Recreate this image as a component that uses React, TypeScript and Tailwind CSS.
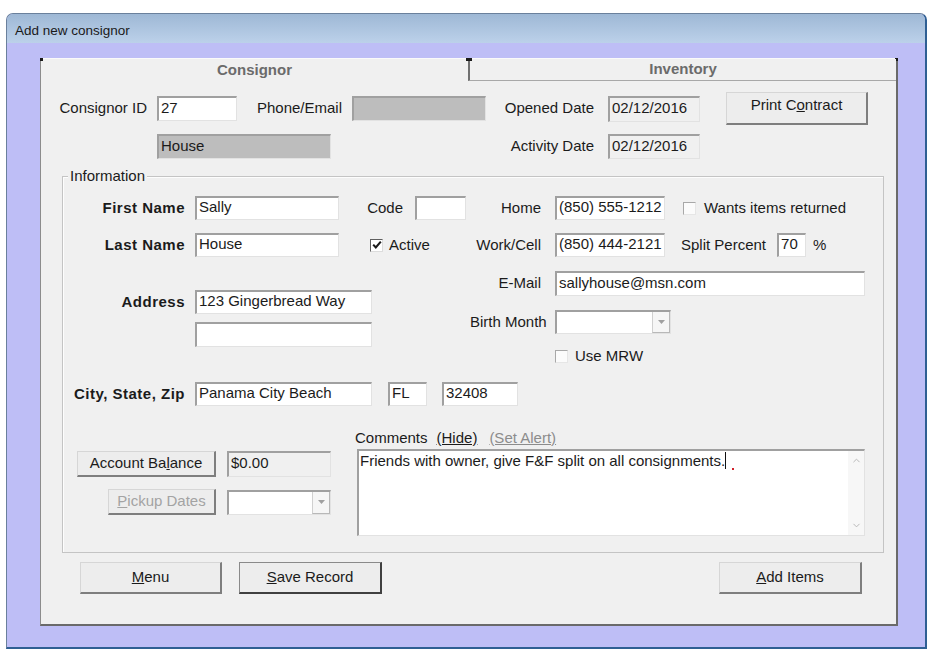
import React from 'react';
import { ChevronUp, ChevronDown } from 'lucide-react';

const sunken =
  'border-t-2 border-l-2 border-r border-b border-t-[#a0a0a0] border-l-[#a0a0a0] border-r-[#e2e2e2] border-b-[#e2e2e2]';

function TextBox({
  className,
  value,
  tone = 'white',
}: {
  className: string;
  value?: string;
  tone?: 'white' | 'gray' | 'disabled';
}) {
  const bg = tone === 'gray' ? 'bg-[#bdbdbd]' : tone === 'disabled' ? 'bg-[#f0f0f0]' : 'bg-white';
  return (
    <div
      className={`${sunken} ${bg} ${className} flex items-center pl-[2px] pb-[2px] text-[15px] text-[#1b1b1b] whitespace-nowrap overflow-hidden shrink-0`}
    >
      {value}
    </div>
  );
}

function Combo({ className }: { className: string }) {
  return (
    <div className={`${sunken} bg-white ${className} flex justify-end shrink-0`}>
      <div className="w-[18px] h-full bg-[#f6f6f6] border-l border-l-[#d0d0d0] border-r border-r-[#b8b8b8] border-b border-b-[#b8b8b8] flex items-center justify-center">
        <svg width="7" height="4" viewBox="0 0 7 4">
          <path d="M0 0h7L3.5 4z" fill="#a0a0a0" />
        </svg>
      </div>
    </div>
  );
}

function Btn({
  className,
  children,
  def = false,
  disabled = false,
}: {
  className: string;
  children: React.ReactNode;
  def?: boolean;
  disabled?: boolean;
}) {
  const border = def
    ? 'border border-t-[#8a8a8a] border-l-[#8a8a8a] border-r-2 border-b-2 border-r-[#404040] border-b-[#404040]'
    : 'border border-t-[#d6d6d6] border-l-[#d6d6d6] border-r-2 border-b-2 border-r-[#7e7e7e] border-b-[#7e7e7e]';
  return (
    <div
      className={`${border} ${className} bg-[#ededed] flex items-center justify-center text-[15px] whitespace-nowrap shrink-0 ${
        disabled ? 'text-[#a3a3a3]' : 'text-[#1b1b1b]'
      }`}
    >
      {children}
    </div>
  );
}

function Check({ checked = false }: { checked?: boolean }) {
  return (
    <div
      className={`w-[13px] h-[13px] shrink-0 flex items-center justify-center border ${
        checked
          ? 'border-t-[#5f5f5f] border-l-[#5f5f5f] border-r-[#dcdcdc] border-b-[#dcdcdc] bg-white'
          : 'border-t-[#a8a8a8] border-l-[#a8a8a8] border-r-[#e6e6e6] border-b-[#e6e6e6] bg-[#fbfbfb]'
      }`}
    >
      {checked && (
        <svg width="10" height="10" viewBox="0 0 10 10">
          <path d="M1.2 4.6 L3.8 7.4 L8.8 1.6" stroke="#1a1a1a" strokeWidth="2.1" fill="none" />
        </svg>
      )}
    </div>
  );
}

const boldLabel = 'font-bold tracking-[0.5px] text-[15px] text-[#1b1b1b]';

export default function App() {
  return (
    <div className="w-[933px] h-[655px] bg-white overflow-hidden pt-[13px] pl-[6px] font-['Liberation_Sans',Arial,sans-serif] text-[15px] text-[#1b1b1b]">
      {/* Window */}
      <div className="w-[921px] h-[636px] rounded-t-[7px] border border-[#6a809c] border-r-2 border-r-[#2f5f93] border-b-2 border-b-[#2f5f93] bg-[#bebef6] flex flex-col overflow-hidden">
        {/* Title bar */}
        <div className="h-[29px] shrink-0 bg-gradient-to-b from-[#9eb8d5] to-[#bcd1ea] flex items-center pl-[8px] pt-[5px] text-[13.5px] text-[#1a1a1a]">
          Add new consignor
        </div>

        {/* Body */}
        <div className="pl-[33px] pt-[15px]">
          {/* Tab panel */}
          <div className="relative w-[858px] h-[568px] bg-[#f0f0f0] border-t border-t-[#fafafa] border-l border-l-[#8c8c8c] border-r-2 border-r-[#6a6a6a] border-b-2 border-b-[#6a6a6a] flex flex-col">
            <span className="absolute -top-[1px] -left-[1px] w-[3px] h-[3px] bg-[#1a1a1a]" />
            <span className="absolute -top-[1px] -right-[2px] w-[3px] h-[3px] bg-[#1a1a1a]" />

            {/* Tabs */}
            <div className="h-[22px] flex shrink-0">
              <div className="w-[427px] flex items-center justify-center font-bold text-[15px] text-[#6b6b6b]">
                Consignor
              </div>
              <div className="relative flex-1 border-l-2 border-l-[#707070] border-b border-b-[#a8a8a8] bg-[#f0f0f0] flex items-center justify-center font-bold text-[15px] text-[#6b6b6b]">
                <span className="absolute -top-[1px] -left-[4px] w-[6px] h-[3px] bg-[#1a1a1a]" />
                Inventory
              </div>
            </div>

            {/* Top section */}
            <div className="pt-[11px]">
              {/* Row A */}
              <div className="flex items-center h-[33px]">
                <div className="w-[106px] text-right shrink-0">Consignor ID</div>
                <TextBox className="ml-[10px] w-[80px] h-[25px]" value="27" />
                <div className="w-[105px] text-right shrink-0">Phone/Email</div>
                <TextBox className="ml-[10px] w-[134px] h-[25px]" tone="gray" />
                <div className="w-[108px] text-right shrink-0">Opened Date</div>
                <TextBox className="ml-[14px] w-[92px] h-[26px]" tone="disabled" value="02/12/2016" />
                <Btn className="ml-[26px] w-[142px] h-[33px] pb-[6px]">
                  <span>
                    Print C<span className="underline">o</span>ntract
                  </span>
                </Btn>
              </div>
              {/* Row B */}
              <div className="flex items-center mt-[9px] h-[25px]">
                <div className="w-[116px] shrink-0" />
                <TextBox className="w-[174px] h-[25px]" tone="gray" value="House" />
                <div className="w-[263px] text-right shrink-0">Activity Date</div>
                <TextBox className="ml-[14px] w-[92px] h-[25px]" tone="disabled" value="02/12/2016" />
              </div>
            </div>

            {/* Information group */}
            <div className="relative mt-[17px] ml-[21px] w-[822px] border border-[#c4c4c4] shadow-[inset_1px_1px_0_#fdfdfd] pt-[19px] pb-[16px]">
              <span className="absolute -top-[10px] left-[5px] bg-[#f0f0f0] px-[2px] leading-[18px] text-[15px]">
                Information
              </span>

              {/* First Name row */}
              <div className="flex items-center h-[24px]">
                <div className={`w-[122px] text-right shrink-0 ${boldLabel}`}>First Name</div>
                <TextBox className="ml-[10px] w-[144px] h-[24px]" value="Sally" />
                <div className="w-[64px] text-right shrink-0">Code</div>
                <TextBox className="ml-[12px] w-[51px] h-[24px]" />
                <div className="w-[75px] text-right shrink-0">Home</div>
                <TextBox className="ml-[14px] w-[110px] h-[24px]" value="(850) 555-1212" />
                <div className="ml-[18px] flex items-center">
                  <Check />
                  <span className="ml-[8px] whitespace-nowrap">Wants items returned</span>
                </div>
              </div>

              {/* Last Name row */}
              <div className="flex items-center h-[24px] mt-[13px]">
                <div className={`w-[122px] text-right shrink-0 ${boldLabel}`}>Last Name</div>
                <TextBox className="ml-[10px] w-[144px] h-[24px]" value="House" />
                <div className="w-[127px] pl-[31px] flex items-center shrink-0">
                  <Check checked />
                  <span className="ml-[6px]">Active</span>
                </div>
                <div className="w-[75px] text-right shrink-0">Work/Cell</div>
                <TextBox className="ml-[14px] w-[110px] h-[24px]" value="(850) 444-2121" />
                <span className="ml-[16px] whitespace-nowrap">Split Percent</span>
                <TextBox className="ml-[11px] w-[29px] h-[24px]" value="70" />
                <span className="ml-[7px]">%</span>
              </div>

              {/* Address / E-mail block */}
              <div className="flex mt-[14px]">
                <div className="w-[407px] shrink-0 pt-[19px]">
                  <div className="flex items-center h-[24px]">
                    <div className={`w-[122px] text-right shrink-0 ${boldLabel}`}>Address</div>
                    <TextBox className="ml-[10px] w-[177px] h-[24px]" value="123 Gingerbread Way" />
                  </div>
                  <div className="flex items-center h-[25px] mt-[8px]">
                    <TextBox className="ml-[132px] w-[177px] h-[25px]" />
                  </div>
                </div>
                <div className="flex flex-col">
                  <div className="flex items-center h-[25px]">
                    <div className="w-[71px] text-right shrink-0">E-Mail</div>
                    <TextBox className="ml-[14px] w-[310px] h-[25px]" value="sallyhouse@msn.com" />
                  </div>
                  <div className="flex items-center h-[24px] mt-[14px]">
                    <div className="w-[71px] text-right shrink-0 whitespace-nowrap">Birth Month</div>
                    <Combo className="ml-[14px] w-[116px] h-[24px]" />
                  </div>
                  <div className="flex items-center h-[16px] mt-[14px] pl-[85px]">
                    <Check />
                    <span className="ml-[7px]">Use MRW</span>
                  </div>
                </div>
              </div>

              {/* City row */}
              <div className="flex items-center h-[24px] mt-[18px]">
                <div className={`w-[122px] text-right shrink-0 whitespace-nowrap ${boldLabel}`}>City, State, Zip</div>
                <TextBox className="ml-[10px] w-[177px] h-[24px]" value="Panama City Beach" />
                <TextBox className="ml-[16px] w-[39px] h-[24px]" value="FL" />
                <TextBox className="ml-[15px] w-[76px] h-[24px]" value="32408" />
              </div>

              {/* Bottom block */}
              <div className="flex mt-[23px]">
                <div className="w-[268px] shrink-0 flex flex-col items-end pt-[22px]">
                  <div className="flex items-center">
                    <Btn className="w-[139px] h-[26px]">
                      <span>
                        Account Ba<span className="underline">l</span>ance
                      </span>
                    </Btn>
                    <TextBox className="ml-[11px] w-[104px] h-[26px]" tone="disabled" value="$0.00" />
                  </div>
                  <div className="flex items-center mt-[12px]">
                    <Btn className="w-[108px] h-[26px]" disabled>
                      <span>
                        <span className="underline">P</span>ickup Dates
                      </span>
                    </Btn>
                    <Combo className="ml-[11px] w-[104px] h-[25px]" />
                  </div>
                </div>
                <div className="ml-[26px] flex flex-col">
                  <div className="h-[17px] leading-[17px] -ml-[2px] flex whitespace-nowrap">
                    <span>Comments</span>
                    <span className="ml-[9px] underline">(Hide)</span>
                    <span className="ml-[12px] underline text-[#8c8c8c]">(Set Alert)</span>
                  </div>
                  <div className={`mt-[3px] w-[508px] h-[87px] ${sunken} bg-white flex`}>
                    <div className="flex-1 pl-[1px] pt-[1px] leading-[18px] whitespace-nowrap relative">
                      <span>Friends with owner, give F&amp;F split on all consignments.</span>
                      <span className="inline-block w-[1px] h-[17px] bg-[#111] align-top" />
                      <span className="inline-block ml-[6px] w-[2px] h-[2px] bg-[#d0202a] align-[-4px]" />
                    </div>
                    <div className="w-[16px] h-full bg-[#f7f7f7] flex flex-col items-center justify-between py-[4px]">
                      <ChevronUp size={11} color="#b4b4b4" strokeWidth={2} />
                      <ChevronDown size={11} color="#b4b4b4" strokeWidth={2} />
                    </div>
                  </div>
                </div>
              </div>
            </div>

            {/* Bottom buttons */}
            <div className="flex mt-[9px] pl-[39px] pr-[34px]">
              <Btn className="w-[142px] h-[32px]">
                <span>
                  <span className="underline">M</span>enu
                </span>
              </Btn>
              <Btn className="ml-[17px] w-[143px] h-[32px]" def>
                <span>
                  <span className="underline">S</span>ave Record
                </span>
              </Btn>
              <Btn className="ml-auto w-[143px] h-[32px]">
                <span>
                  <span className="underline">A</span>dd Items
                </span>
              </Btn>
            </div>
          </div>
        </div>
      </div>
    </div>
  );
}
